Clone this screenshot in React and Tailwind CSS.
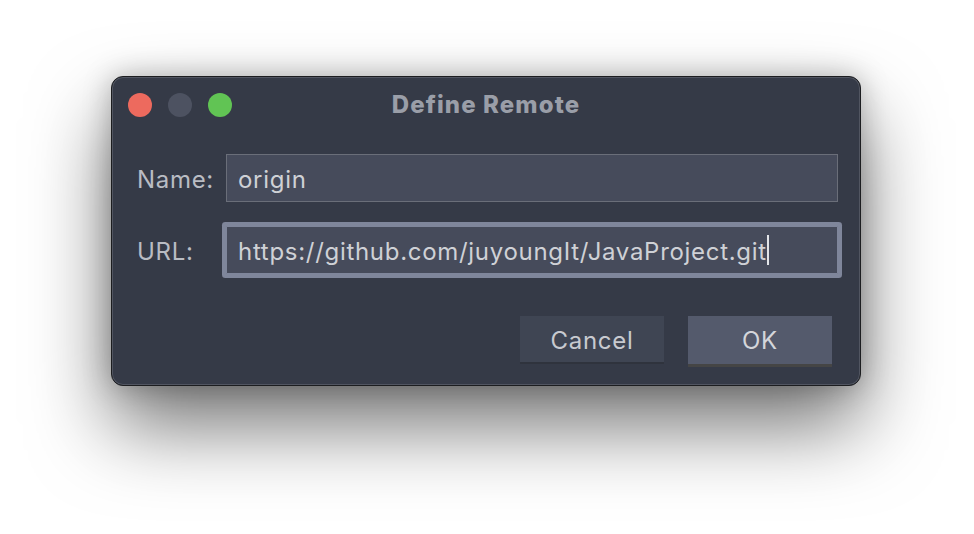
export default function App() {
  return (
    <div
      className="w-full h-[534px] bg-white pt-[76px] pl-[111px] overflow-hidden"
      style={{ fontFamily: 'Inter, "Noto Sans", sans-serif' }}
    >
      <div className="w-[750px] h-[310px] rounded-[12px] bg-[#353a47] border border-[#1c1d20] shadow-[inset_0_0_0_1px_rgba(255,255,255,0.14),0_40px_80px_rgba(0,0,0,0.55),0_0_28px_rgba(0,0,0,0.25)] flex flex-col">
        {/* title bar */}
        <div className="h-[55px] grid grid-cols-[1fr_auto_1fr] items-center">
          <div className="flex items-center gap-4 pl-[16px]">
            <span className="w-6 h-6 rounded-full bg-[#ed6a5e]" />
            <span className="w-6 h-6 rounded-full bg-[#4d5261]" />
            <span className="w-6 h-6 rounded-full bg-[#61c454]" />
          </div>
          <div className="text-[24px] font-extrabold text-[#9a9ea8] tracking-[1.1px] pt-[1px]">Define Remote</div>
          <div />
        </div>

        {/* form */}
        <div className="flex flex-col gap-6 pt-[22px] pl-[25px] pr-[22px] text-[24px] tracking-[0.7px]">
          <div className="flex items-center">
            <div className="w-[89px] pt-[3px] text-[#b9bcc3]">Name:</div>
            <div className="flex-1 h-[48px] bg-[#464b5b] border border-[#6a6e79] flex items-center pl-[11px] pt-[3px] text-[#cfd1d6]">
              origin
            </div>
          </div>
          <div className="flex items-center">
            <div className="w-[89px] pt-[3px] text-[#b9bcc3]">URL:</div>
            <div className="flex-1 h-[48px] bg-[#464b5b] border border-[#7f869b] rounded-[1px] shadow-[0_0_0_4px_#7f869b] flex items-center pl-[11px] pt-[3px] text-[#cfd1d6]">
              <span>https://github.com/juyoungIt/JavaProject.git</span>
              <span className="w-[2px] h-[30px] -mt-[3px] bg-[#e2e4e8]" />
            </div>
          </div>
        </div>

        {/* buttons */}
        <div className="flex justify-end items-start gap-6 pr-[28px] mt-[42px] text-[24px] tracking-[0.7px]">
          <button className="w-[144px] h-[48px] pt-[4px] bg-[#3f4553] border-b-2 border-[#2f333d] text-[#c8cad0]">
            Cancel
          </button>
          <button className="w-[144px] h-[51px] pt-[2px] bg-[#545a6c] border-b-[3px] border-[#454545] text-[#d4d6db]">
            OK
          </button>
        </div>
      </div>
    </div>
  );
}
